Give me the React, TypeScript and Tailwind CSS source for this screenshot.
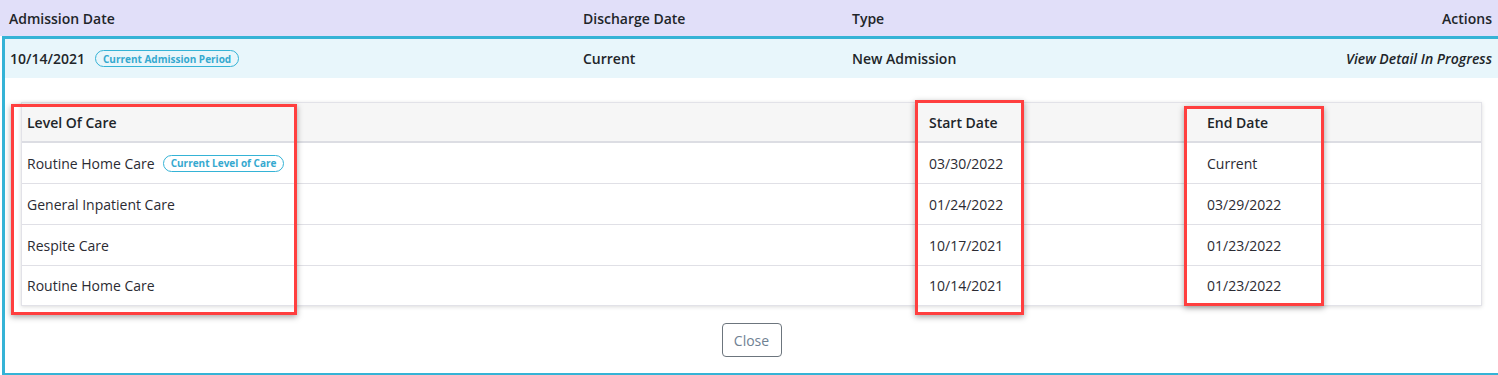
import React from "react";

const rows = [
  { loc: "Routine Home Care", badge: true, start: "03/30/2022", end: "Current" },
  { loc: "General Inpatient Care", badge: false, start: "01/24/2022", end: "03/29/2022" },
  { loc: "Respite Care", badge: false, start: "10/17/2021", end: "01/23/2022" },
  { loc: "Routine Home Care", badge: false, start: "10/14/2021", end: "01/23/2022" },
];

export default function App() {
  return (
    <div
      className="relative w-[1498px] h-[375px] overflow-hidden bg-white text-[#212529]"
      style={{ fontFamily: '"Open Sans", "Noto Sans", sans-serif' }}
    >
      {/* Header */}
      <div className="h-[36px] bg-[#e1dff9] flex items-center text-[14px] font-semibold pl-[9px] pr-[6px]">
        <div className="w-[574px]">Admission Date</div>
        <div className="w-[269px]">Discharge Date</div>
        <div className="flex-1">Type</div>
        <div>Actions</div>
      </div>

      {/* Expanded row */}
      <div className="ml-[2px] border-l-[3px] border-t-[3px] border-b-2 border-[#35b3d6]">
        <div className="h-[39px] bg-[#e8f6fb] flex items-center text-[14px] font-semibold pl-[5px] pr-[6px]">
          <div className="w-[573px] flex items-center">
            <span>10/14/2021</span>
            <span className="ml-[10px] h-[17px] px-[7px] rounded-full border border-[#35b3d6] text-[#35a9cf] text-[10px] font-bold flex items-center leading-none">
              Current Admission Period
            </span>
          </div>
          <div className="w-[269px]">Current</div>
          <div className="flex-1">New Admission</div>
          <div className="italic">View Detail In Progress</div>
        </div>

        <div className="pt-[24px] pb-[16px] pl-[16px] pr-[16px] flex flex-col items-stretch">
          <div className="border border-[#e2e2e8] shadow-[0_1px_4px_rgba(0,0,0,0.14)] text-[14px]">
            <div className="grid grid-cols-[902px_278px_1fr] h-[40px] bg-[#f6f6f6] border-b-2 border-[#dcdde3] font-semibold items-center">
              <div className="pl-[5px]">Level Of Care</div>
              <div className="pl-[5px]">Start Date</div>
              <div className="pl-[5px]">End Date</div>
            </div>
            {rows.map((r, i) => (
              <div
                key={i}
                className={`grid grid-cols-[902px_278px_1fr] items-center text-[#2b2b33] ${
                  i < rows.length - 1 ? "h-[41px] border-b border-[#e0e0e6]" : "h-[39px]"
                }`}
              >
                <div className="pl-[5px] flex items-center">
                  <span>{r.loc}</span>
                  {r.badge && (
                    <span className="ml-[8px] h-[17px] px-[7px] rounded-full border border-[#35b3d6] text-[#35a9cf] text-[10px] font-bold flex items-center leading-none">
                      Current Level of Care
                    </span>
                  )}
                </div>
                <div className="pl-[5px]">{r.start}</div>
                <div className="pl-[5px]">{r.end}</div>
              </div>
            ))}
          </div>

          <div className="flex justify-center mt-[17px]">
            <button className="w-[60px] h-[34px] border border-[#6c757d] rounded-[4px] text-[14px] text-[#6f8193] bg-white">
              Close
            </button>
          </div>
        </div>
      </div>

      {/* Annotation overlays */}
      <div className="absolute left-[11px] top-[104px] w-[286px] h-[211px] border-[3px] border-[#ff3f3f] shadow-[0_2px_6px_rgba(0,0,0,0.35)] pointer-events-none" />
      <div className="absolute left-[915px] top-[100px] w-[109px] h-[215px] border-[3px] border-[#ff3f3f] shadow-[0_2px_6px_rgba(0,0,0,0.35)] pointer-events-none" />
      <div className="absolute left-[1184px] top-[106px] w-[140px] h-[200px] border-[3px] border-[#ff3f3f] shadow-[0_2px_6px_rgba(0,0,0,0.35)] pointer-events-none" />
    </div>
  );
}
